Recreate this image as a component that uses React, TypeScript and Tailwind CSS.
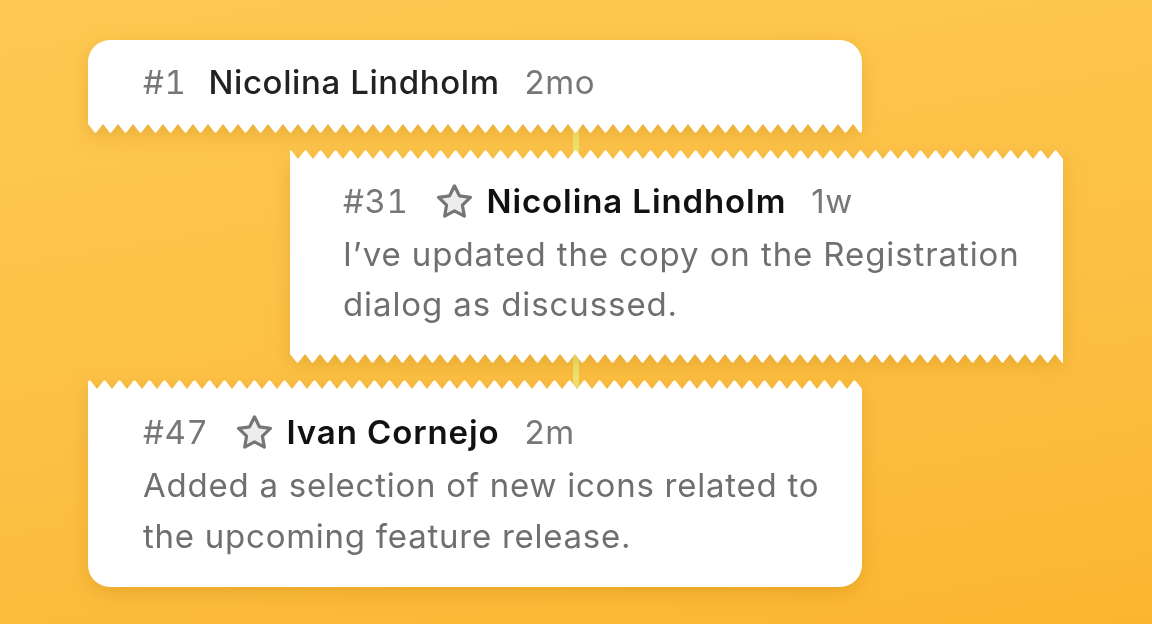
import React from 'react'

interface Entry {
  num: string
  name: string
  time: string
  starred?: boolean
  body?: string[]
}

function Star() {
  return (
    <svg width="35" height="34" viewBox="2.2 1.9 19.6 18.8" className="shrink-0">
      <path
        d="M12 2.8l2.75 5.6 6.15.9-4.45 4.35 1.05 6.1L12 16.85l-5.5 2.9 1.05-6.1L3.1 9.3l6.15-.9z"
        fill="#ededed"
        stroke="#767676"
        strokeWidth="1.8"
        strokeLinejoin="round"
      />
    </svg>
  )
}

function Teeth({ id, flip }: { id: string; flip?: boolean }) {
  return (
    <svg width="100%" height="9" className={flip ? 'block shrink-0 rotate-180' : 'block shrink-0'}>
      <defs>
        <pattern id={id} width="15" height="9" patternUnits="userSpaceOnUse">
          <path d="M0 0 L6.3 8 Q7.5 9.4 8.7 8 L15 0 Z" fill="#ffffff" />
        </pattern>
      </defs>
      <rect width="100%" height="9" fill={`url(#${id})`} />
    </svg>
  )
}

function Header({ e }: { e: Entry }) {
  return (
    <div className="flex items-center h-[34px] text-[33px] leading-[34px] tracking-[0.6px] whitespace-nowrap">
      <span className={e.starred ? 'text-[#777777] mr-[28px] tabular-nums' : 'text-[#777777] mr-[22px] tabular-nums'}>
        {e.num}
      </span>
      {e.starred && (
        <span className="mr-[15px]">
          <Star />
        </span>
      )}
      <span className={e.starred ? 'font-semibold text-[#111111] tracking-[0.9px]' : 'font-medium text-[#222222]'}>
        {e.name}
      </span>
      <span className="text-[#777777] ml-[25px]">{e.time}</span>
    </div>
  )
}

function Connector() {
  return <div className="relative z-0 shrink-0 ml-[573px] w-[6px] h-[33px] -my-[8px] bg-[#efe673]" />
}

export default function App() {
  const first: Entry = { num: '#1', name: 'Nicolina Lindholm', time: '2mo' }
  const second: Entry = {
    num: '#31',
    name: 'Nicolina Lindholm',
    time: '1w',
    starred: true,
    body: ['I\u2019ve updated the copy on the Registration', 'dialog as discussed.'],
  }
  const third: Entry = {
    num: '#47',
    name: 'Ivan Cornejo',
    time: '2m',
    starred: true,
    body: ['Added a selection of new icons related to', 'the upcoming feature release.'],
  }

  return (
    <div
      className="w-[1152px] h-[624px] overflow-hidden bg-[linear-gradient(170deg,#fdc951_0%,#fcc045_55%,#fbb630_100%)] pt-[40px] flex flex-col"
      style={{ fontFamily: 'Inter, "Noto Sans", sans-serif' }}
    >
      <div className="relative z-10 shrink-0 ml-[88px] w-[774px] drop-shadow-[0_6px_9px_rgba(180,110,0,0.25)]">
        <div className="bg-white rounded-t-[22px] pt-[25px] pb-[25px] px-[55px]">
          <Header e={first} />
        </div>
        <Teeth id="t1" />
      </div>

      <Connector />

      <div className="relative z-10 shrink-0 ml-[290px] w-[773px] drop-shadow-[0_6px_9px_rgba(180,110,0,0.25)]">
        <Teeth id="t2" flip />
        <div className="bg-white pt-[25px] pb-[25px] px-[53px]">
          <Header e={second} />
          <div className="mt-[11px] text-[33px] leading-[50px] text-[#6f6f6f] tracking-[0.9px] whitespace-nowrap">
            {second.body?.map((l) => (
              <div key={l}>{l}</div>
            ))}
          </div>
        </div>
        <Teeth id="t3" />
      </div>

      <Connector />

      <div className="relative z-10 shrink-0 ml-[88px] w-[774px] drop-shadow-[0_6px_9px_rgba(180,110,0,0.25)]">
        <Teeth id="t4" flip />
        <div className="bg-white rounded-b-[22px] pt-[26px] pb-[25px] px-[55px]">
          <Header e={third} />
          <div className="mt-[11px] text-[33px] leading-[51px] text-[#6f6f6f] tracking-[0.75px] whitespace-nowrap">
            {third.body?.map((l) => (
              <div key={l}>{l}</div>
            ))}
          </div>
        </div>
      </div>
    </div>
  )
}
